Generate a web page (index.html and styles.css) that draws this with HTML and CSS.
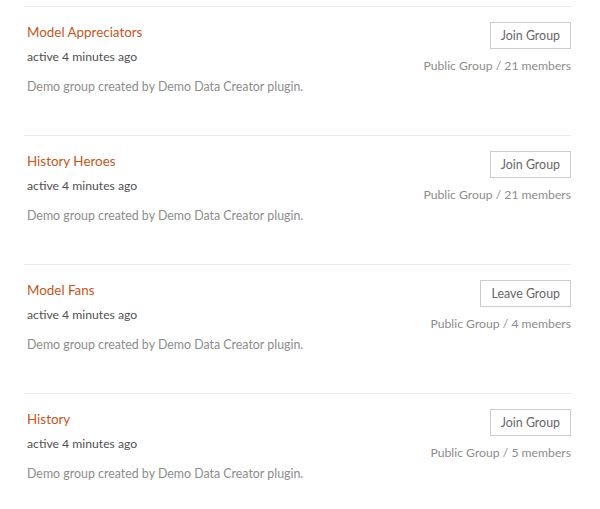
FILE: index.html
```html
<!DOCTYPE html>
<html lang="en">
<head>
  <meta charset="UTF-8">
  <title>Groups</title>
  <link rel="stylesheet" href="styles.css">
</head>
<body>
  <ul class="groups">
    <li class="group">
      <div class="info">
        <a class="title" href="#">Model Appreciators</a>
        <p class="active">active 4 minutes ago</p>
        <p class="desc">Demo group created by Demo Data Creator plugin.</p>
      </div>
      <div class="action">
        <button class="btn">Join Group</button>
        <p class="meta">Public Group / 21 members</p>
      </div>
    </li>
    <li class="group">
      <div class="info">
        <a class="title" href="#">History Heroes</a>
        <p class="active">active 4 minutes ago</p>
        <p class="desc">Demo group created by Demo Data Creator plugin.</p>
      </div>
      <div class="action">
        <button class="btn">Join Group</button>
        <p class="meta">Public Group / 21 members</p>
      </div>
    </li>
    <li class="group">
      <div class="info">
        <a class="title" href="#">Model Fans</a>
        <p class="active">active 4 minutes ago</p>
        <p class="desc">Demo group created by Demo Data Creator plugin.</p>
      </div>
      <div class="action">
        <button class="btn">Leave Group</button>
        <p class="meta">Public Group / 4 members</p>
      </div>
    </li>
    <li class="group">
      <div class="info">
        <a class="title" href="#">History</a>
        <p class="active">active 4 minutes ago</p>
        <p class="desc">Demo group created by Demo Data Creator plugin.</p>
      </div>
      <div class="action">
        <button class="btn">Join Group</button>
        <p class="meta">Public Group / 5 members</p>
      </div>
    </li>
  </ul>
</body>
</html>
```
FILE: styles.css
```css
body {
  margin: 0;
  background: #fff;
  font-family: Lato, "Liberation Sans", sans-serif;
  color: #333;
}
.groups {
  list-style: none;
  margin: 6px 29px 0 24px;
  padding: 0;
}
.group {
  display: flex;
  justify-content: space-between;
  border-top: 1px solid #eaeaea;
  height: 113px;
  padding: 15px 0 0 3px;
}
.title {
  display: block;
  font-size: 13.4px;
  line-height: 20px;
  color: #c4561d;
  text-decoration: none;
  margin-bottom: 5px;
}
.active {
  margin: 0 0 10px;
  font-size: 12.2px;
  line-height: 20px;
  color: #505050;
}
.desc {
  margin: 0;
  font-size: 12.4px;
  line-height: 20px;
  color: #8c8c8c;
}
.action {
  display: flex;
  flex-direction: column;
  align-items: flex-end;
}
.btn {
  height: 27px;
  padding: 0 10px;
  background: #fff;
  border: 1px solid #ccc;
  font-family: inherit;
  font-size: 12.4px;
  color: #666;
}
.meta {
  margin: 7px 0 0;
  font-size: 12.2px;
  line-height: 20px;
  color: #8c8c8c;
}
```
